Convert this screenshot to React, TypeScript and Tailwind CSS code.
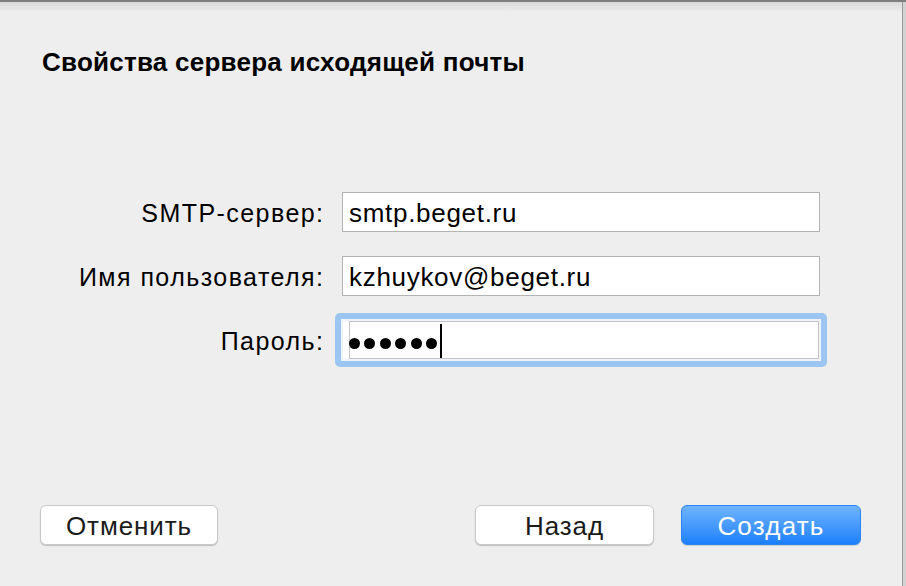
export default function App() {
  const font = { fontFamily: '"Liberation Sans", Arial, sans-serif' };
  const labelCls =
    "-mr-[1.5px] flex h-[40px] items-center justify-end pt-[3px] text-[25px] tracking-[1.45px] text-black";
  const inputCls =
    "flex h-[40px] items-center border border-[#b3b3b3] bg-white pl-[6px] pt-[2px] text-[26px] tracking-[0.7px] text-black";
  return (
    <div className="flex h-[586px] w-[906px] overflow-hidden bg-[#eeeeee]" style={font}>
      <div className="flex flex-1 flex-col">
        {/* top window edge */}
        <div className="h-[2px] bg-[#7e7e7e]" />
        <div className="h-[9px] bg-gradient-to-b from-[#d9d9d9] to-[#ececec]" />

        <h1 className="ml-[42px] mt-[36px] text-[26px] font-bold leading-[30px] tracking-[0.25px] text-black">
          Свойства сервера исходящей почты
        </h1>

        {/* form */}
        <div className="mt-[115px] grid grid-cols-[323px_478px] gap-x-[19px] gap-y-[24px]">
          <label className={labelCls}>SMTP-сервер:</label>
          <div className={inputCls}>smtp.beget.ru</div>

          <label className={labelCls}>Имя пользователя:</label>
          <div className={inputCls}>kzhuykov@beget.ru</div>

          <label className={labelCls}>Пароль:</label>
          {/* focused field with its blue ring */}
          <div className="-mx-[7px] -my-[7px] rounded-[5px] bg-[#9cc5f1] p-[6px]">
            <div className="flex h-[42px] items-center border-[2px] border-[#eef3fa] bg-white pl-[6px] text-black">
              <div className="flex h-full w-full items-center border border-[#c4c4c4] pl-[0px]">
                <div className="ml-[-1px] mt-[6px] flex items-center gap-[4.4px]">
                  {[0, 1, 2, 3, 4, 5].map((i) => (
                    <span key={i} className="h-[11px] w-[11px] rounded-full bg-black" />
                  ))}
                </div>
                <span className="ml-[3px] mt-[2px] h-[34px] w-[2px] bg-black" />
              </div>
            </div>
          </div>
        </div>

        {/* buttons */}
        <div className="mt-auto mb-[41px] flex items-center pl-[40px] pr-[41px]">
          <button className="h-[40px] w-[178px] rounded-[6px] border border-[#c8c8c8] bg-white pt-[1px] text-[26px] tracking-[0.9px] text-[#1b1b1b] shadow-[0_1px_1px_rgba(0,0,0,0.2)]">
            Отменить
          </button>
          <div className="flex-1" />
          <button className="h-[40px] w-[179px] rounded-[6px] border border-[#c8c8c8] bg-white pt-[1px] text-[26px] tracking-[0.9px] text-[#1b1b1b] shadow-[0_1px_1px_rgba(0,0,0,0.2)]">
            Назад
          </button>
          <button className="ml-[27px] h-[40px] w-[180px] rounded-[6px] border border-[#2a86f5] bg-gradient-to-b from-[#6db4fb] to-[#1a7ffb] pt-[1px] text-[26px] tracking-[1.2px] text-white shadow-[0_1px_1px_rgba(0,0,0,0.15)]">
            Создать
          </button>
        </div>
      </div>

      {/* right window edge */}
      <div className="flex flex-col">
        <div className="h-[2px] bg-[#7e7e7e]" />
        <div className="flex flex-1">
          <div className="w-[1px] bg-[#9a9a9a]" />
          <div className="w-[3px] bg-[#d2d2d2]" />
        </div>
      </div>
    </div>
  );
}
